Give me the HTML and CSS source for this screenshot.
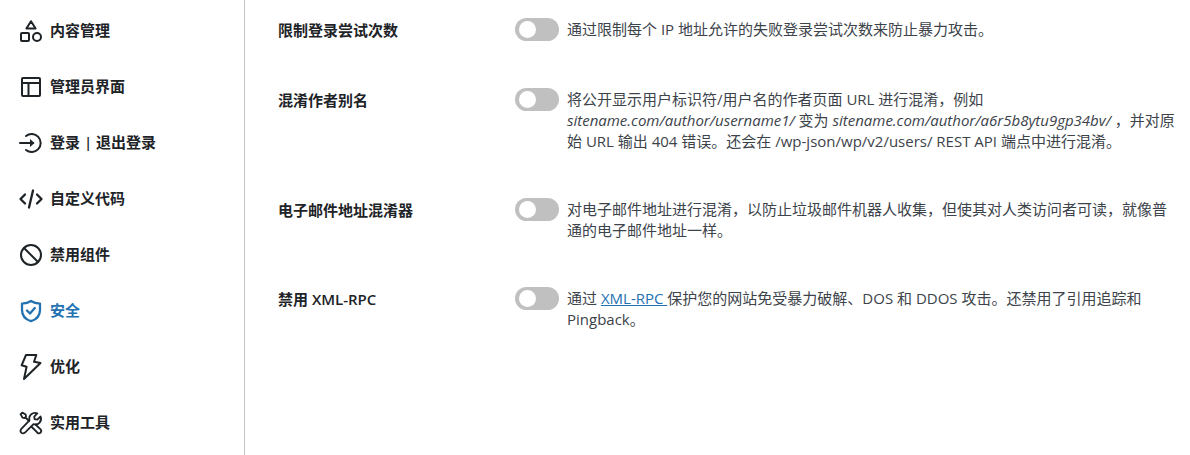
FILE: index.html
```html
<!DOCTYPE html>
<html lang="zh-CN">

<head>
    <meta charset="UTF-8">
    <meta name="viewport" content="width=device-width, initial-scale=1.0">
    <title>安全</title>
    <link rel="stylesheet" href="styles.css">
</head>

<body>
    <div class="settings">
        <!-- Tabs -->
        <nav class="tabs">
            <a href="#content" class="tab">
                <svg class="icon" viewBox="0 0 24 24"><path d="M12 2.2 16.6 9.5H7.4Z"/><rect x="2" y="14" width="8" height="8" rx="1"/><circle cx="18" cy="18" r="4"/></svg>
                <span>内容管理</span>
            </a>
            <a href="#admin" class="tab">
                <svg class="icon" viewBox="0 0 24 24"><rect x="3" y="3" width="18" height="18" rx="1"/><path d="M3 8H21M9.5 8V21"/></svg>
                <span>管理员界面</span>
            </a>
            <a href="#login" class="tab">
                <svg class="icon" viewBox="0 0 24 24"><path d="M7 5A9 9 0 1 1 7 19M1 12H14"/><path class="solid" d="M11 8 15.5 12 11 16Z"/></svg>
                <span>登录 | 退出登录</span>
            </a>
            <a href="#code" class="tab">
                <svg class="icon bold" viewBox="0 0 24 24"><path d="M6 7.5 1.5 12 6 16.5M18 7.5 22.5 12 18 16.5M14 3.5 10 20.5"/></svg>
                <span>自定义代码</span>
            </a>
            <a href="#disable" class="tab">
                <svg class="icon" viewBox="0 0 24 24"><circle cx="12" cy="12" r="10"/><path d="M5 5 19 19"/></svg>
                <span>禁用组件</span>
            </a>
            <a href="#security" class="tab active">
                <svg class="icon bold" viewBox="0 0 24 24"><path d="M12 2C9.5 3.7 6.5 4.5 3 4.7V11C3 16.5 6.5 20.5 12 22.2 17.5 20.5 21 16.5 21 11V4.7C17.5 4.5 14.5 3.7 12 2Z"/><path d="M8 11.5 11 14.5 15.8 9"/></svg>
                <span>安全</span>
            </a>
            <a href="#optimize" class="tab">
                <svg class="icon" viewBox="0 0 24 24"><path d="M7 0H17.3L15 6.7 21.5 8 5 24 7.6 11.7 2.6 10.3Z"/></svg>
                <span>优化</span>
            </a>
            <a href="#utilities" class="tab">
                <svg class="icon thin" viewBox="0 0 24 24"><path d="M18.3 2.4C14 .8 9.2 4 10.5 9.3L2.1 18.2C.3 20.6 3.2 23.6 5.7 21.8L14.5 13.2C19.5 14.7 23.4 10 21.6 5.5L18.3 8.7 15.6 8.2 15.2 5.6Z"/><path d="M1.6 3.2 3.3 1.6 6.7 3.5 7 5.7 5.7 7 3.5 6.6ZM6.5 6.5 10 10M16.5 13.5 21.6 18.4C23.5 20.6 20.7 23.5 18.4 21.7L12.8 16"/></svg>
                <span>实用工具</span>
            </a>
        </nav>

        <!-- Security options -->
        <main class="fields">
            <div class="field">
                <label class="title" for="limitLogin">限制登录尝试次数</label>
                <input type="checkbox" class="toggle" id="limitLogin">
                <p class="description">通过限制每个 IP 地址允许的失败登录尝试次数来防止暴力攻击。</p>
            </div>
            <div class="field">
                <label class="title" for="authorSlugs">混淆作者别名</label>
                <input type="checkbox" class="toggle" id="authorSlugs">
                <p class="description">将公开显示用户标识符/用户名的作者页面 URL 进行混淆，例如 <em>sitename.com/author/username1/</em> 变为 <em>sitename.com/author/a6r5b8ytu9gp34bv/</em> ，并对原始 URL 输出 404 错误。还会在 /wp-json/wp/v2/users/ REST API 端点中进行混淆。</p>
            </div>
            <div class="field">
                <label class="title" for="emailObfuscator">电子邮件地址混淆器</label>
                <input type="checkbox" class="toggle" id="emailObfuscator">
                <p class="description">对电子邮件地址进行混淆，以防止垃圾邮件机器人收集，但使其对人类访问者可读，就像普通的电子邮件地址一样。</p>
            </div>
            <div class="field">
                <label class="title" for="disableXmlrpc">禁用 XML-RPC</label>
                <input type="checkbox" class="toggle" id="disableXmlrpc">
                <p class="description">通过 <a href="#xmlrpc">XML-RPC </a>保护您的网站免受暴力破解、DOS 和 DDOS 攻击。还禁用了引用追踪和 Pingback。</p>
            </div>
        </main>
    </div>
</body>

</html>
```

FILE: styles.css
```css
* {
    box-sizing: border-box;
}

body {
    margin: 0;
    background: #ffffff;
    color: #3c434a;
    font-family: "Open Sans", "Noto Sans CJK SC", sans-serif;
    font-size: 15px;
    line-height: 21px;
}

.settings {
    display: flex;
    min-height: 100vh;
}

.tabs {
    flex: 0 0 245px;
    padding-top: 3px;
    border-right: 1px solid #c3c4c7;
}

.tab {
    display: flex;
    align-items: flex-start;
    gap: 7px;
    padding: 16px 19px;
    color: #1d2327;
    font-weight: 600;
    line-height: 23px;
    text-decoration: none;
}

.tab.active {
    color: #2271b1;
}

.icon {
    flex: none;
    width: 24px;
    height: 24px;
    overflow: visible;
    fill: none;
    stroke: currentColor;
    stroke-width: 2;
    stroke-linecap: round;
    stroke-linejoin: round;
}

.icon.thin {
    stroke-width: 1.8;
}

.icon.bold {
    stroke-width: 2.3;
}

.icon .solid {
    fill: currentColor;
    stroke: none;
}

.fields {
    flex: 1;
    display: flex;
    flex-direction: column;
    gap: 46px;
    padding: 18px 14px 18px 33px;
}

.field {
    display: grid;
    grid-template-columns: 237px 44px 1fr;
    align-items: start;
    min-height: 24px;
}

.title {
    padding-top: 2px;
    color: #1d2327;
    font-weight: 600;
}

.toggle {
    appearance: none;
    width: 44px;
    height: 23px;
    margin: 0;
    padding: 3px 4px;
    border-radius: 12px;
    background: #c0c0c0;
    cursor: pointer;
}

.toggle::before {
    content: "";
    display: block;
    width: 17px;
    height: 17px;
    border-radius: 50%;
    background: #ffffff;
}

.toggle:checked {
    background: #2271b1;
}

.toggle:checked::before {
    margin-left: auto;
}

.description {
    margin: 0;
    padding: 1px 0 0 8px;
}

.description a {
    color: #2271b1;
}
```
